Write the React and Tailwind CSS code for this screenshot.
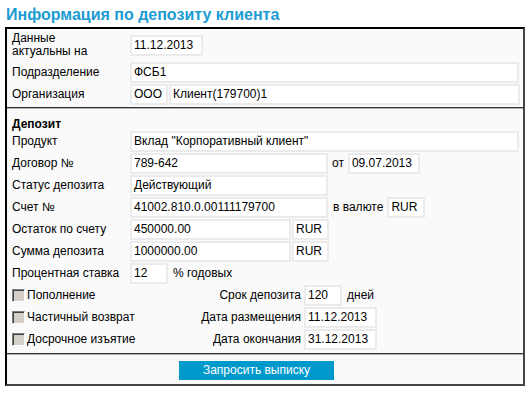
import React from "react";

const Box = ({ className = "", children }) => (
  <div
    className={`h-[21px] shrink-0 border-2 border-[#ebebeb] bg-white pl-[2px] flex items-center whitespace-nowrap overflow-hidden ${className}`}
  >
    {children}
  </div>
);

const Label = ({ children, className = "" }) => (
  <div className={`w-[118px] shrink-0 ${className}`}>{children}</div>
);

const Row = ({ children, className = "" }) => (
  <div className={`flex items-center h-[22px] ${className}`}>{children}</div>
);

const Check = ({ label }) => (
  <div className="flex items-center w-[170px] shrink-0">
    <div className="w-[13px] h-[13px] bg-[#d4d0c8] border border-t-[#808080] border-l-[#808080] border-r-white border-b-white shadow-[inset_1px_1px_0_#404040]" />
    <span className="ml-[2px]">{label}</span>
  </div>
);

const Divider = () => (
  <div className="h-[2px] border-t border-t-[#333333] border-b border-b-[#b0b0b0]" />
);

export default function App() {
  return (
    <div
      className="w-[531px] h-[395px] bg-white text-black text-[12px] leading-[14px]"
      style={{ fontFamily: '"Liberation Sans", Arial, sans-serif' }}
    >
      <div className="h-[27px] pl-[6px] pt-[6px] text-[16px] leading-[18px] font-bold text-[#1a9bd2]">
        Информация по депозиту клиента
      </div>
      <div className="ml-[5px] w-[520px] border-2 border-black border-r-[#444444] border-b-[#444444] bg-[#fafafa]">
        {/* Section 1 */}
        <div className="pl-[5px] pb-[2px]">
          <div className="flex items-center h-[32px]">
            <Label className="leading-[13px]">
              Данные
              <br />
              актуальны на
            </Label>
            <Box className="w-[73px]">11.12.2013</Box>
          </div>
          <Row>
            <Label>Подразделение</Label>
            <Box className="w-[389px]">ФСБ1</Box>
          </Row>
          <Row>
            <Label>Организация</Label>
            <Box className="w-[38px]">ООО</Box>
            <Box className="w-[351px] ml-[1px]">Клиент(179700)1</Box>
          </Row>
        </div>
        <Divider />
        {/* Section 2 */}
        <div className="pl-[5px] pb-[3px]">
          <div className="h-[21px] pt-[8px] font-bold">Депозит</div>
          <Row>
            <Label>Продукт</Label>
            <Box className="w-[389px]">Вклад "Корпоративный клиент"</Box>
          </Row>
          <Row>
            <Label>Договор №</Label>
            <Box className="w-[198px]">789-642</Box>
            <span className="ml-[4px]">от</span>
            <Box className="w-[72px] ml-[4px]">09.07.2013</Box>
          </Row>
          <Row>
            <Label>Статус депозита</Label>
            <Box className="w-[198px]">Действующий</Box>
          </Row>
          <Row>
            <Label>Счет №</Label>
            <Box className="w-[198px]">41002.810.0.00111179700</Box>
            <span className="ml-[5px]">в валюте</span>
            <Box className="w-[38px] ml-[4px]">RUR</Box>
          </Row>
          <Row>
            <Label>Остаток по счету</Label>
            <Box className="w-[161px]">450000.00</Box>
            <Box className="w-[37px] ml-[1px]">RUR</Box>
          </Row>
          <Row>
            <Label>Сумма депозита</Label>
            <Box className="w-[161px]">1000000.00</Box>
            <Box className="w-[37px] ml-[1px]">RUR</Box>
          </Row>
          <Row>
            <Label>Процентная ставка</Label>
            <Box className="w-[38px]">12</Box>
            <span className="ml-[5px]">% годовых</span>
          </Row>
          <Row>
            <Check label="Пополнение" />
            <div className="w-[119px] text-right">Срок депозита</div>
            <Box className="w-[38px] ml-[3px]">120</Box>
            <span className="ml-[5px]">дней</span>
          </Row>
          <Row>
            <Check label="Частичный возврат" />
            <div className="w-[119px] text-right">Дата размещения</div>
            <Box className="w-[73px] ml-[3px]">11.12.2013</Box>
          </Row>
          <Row>
            <Check label="Досрочное изъятие" />
            <div className="w-[119px] text-right">Дата окончания</div>
            <Box className="w-[73px] ml-[3px]">31.12.2013</Box>
          </Row>
        </div>
        <Divider />
        {/* Section 3 */}
        <div className="pt-[6px] pb-[4px] pl-[172px]">
          <button className="w-[155px] h-[19px] bg-[#0099cc] text-white text-[12px] leading-[19px] text-center">
            Запросить выписку
          </button>
        </div>
      </div>
    </div>
  );
}
